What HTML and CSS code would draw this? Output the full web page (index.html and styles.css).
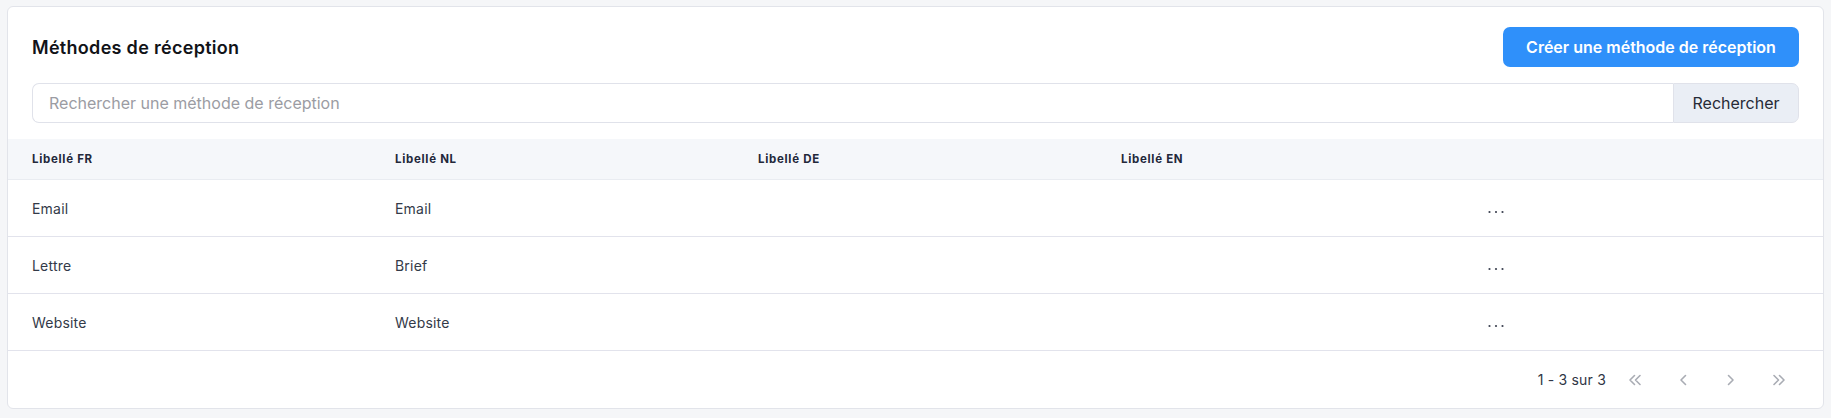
FILE: index.html
```html
<!DOCTYPE html>
<html lang="fr">
<head>
<meta charset="utf-8">
<title>Méthodes de réception</title>
<link rel="stylesheet" href="styles.css">
</head>
<body>
<div class="card">
  <div class="card-head">
    <h1 class="title">Méthodes de réception</h1>
    <button class="btn-primary">Créer une méthode de réception</button>
  </div>
  <div class="search">
    <input class="search-input" type="text" placeholder="Rechercher une méthode de réception">
    <button class="search-btn">Rechercher</button>
  </div>
  <div class="table">
    <div class="row head">
      <div class="cell">Libellé FR</div>
      <div class="cell">Libellé NL</div>
      <div class="cell">Libellé DE</div>
      <div class="cell">Libellé EN</div>
      <div class="cell"></div>
    </div>
    <div class="row">
      <div class="cell">Email</div>
      <div class="cell">Email</div>
      <div class="cell"></div>
      <div class="cell"></div>
      <div class="cell"><span class="dots"><svg width="16" height="4" viewBox="0 0 16 4"><circle cx="1.5" cy="2" r="1.1"/><circle cx="8" cy="2" r="1.1"/><circle cx="14.5" cy="2" r="1.1"/></svg></span></div>
    </div>
    <div class="row">
      <div class="cell">Lettre</div>
      <div class="cell">Brief</div>
      <div class="cell"></div>
      <div class="cell"></div>
      <div class="cell"><span class="dots"><svg width="16" height="4" viewBox="0 0 16 4"><circle cx="1.5" cy="2" r="1.1"/><circle cx="8" cy="2" r="1.1"/><circle cx="14.5" cy="2" r="1.1"/></svg></span></div>
    </div>
    <div class="row">
      <div class="cell">Website</div>
      <div class="cell">Website</div>
      <div class="cell"></div>
      <div class="cell"></div>
      <div class="cell"><span class="dots"><svg width="16" height="4" viewBox="0 0 16 4"><circle cx="1.5" cy="2" r="1.1"/><circle cx="8" cy="2" r="1.1"/><circle cx="14.5" cy="2" r="1.1"/></svg></span></div>
    </div>
  </div>
  <div class="footer">
    <span class="count">1 - 3 sur 3</span>
    <div class="pager">
      <span class="pg"><svg width="16" height="12" viewBox="0 0 16 12"><path d="M7.5 1.5 L3 6 L7.5 10.5 M13 1.5 L8.5 6 L13 10.5"/></svg></span>
      <span class="pg"><svg width="16" height="12" viewBox="0 0 16 12"><path d="M10.5 1.5 L6 6 L10.5 10.5"/></svg></span>
      <span class="pg"><svg width="16" height="12" viewBox="0 0 16 12"><path d="M5.5 1.5 L10 6 L5.5 10.5"/></svg></span>
      <span class="pg"><svg width="16" height="12" viewBox="0 0 16 12"><path d="M3 1.5 L7.5 6 L3 10.5 M8.5 1.5 L13 6 L8.5 10.5"/></svg></span>
    </div>
  </div>
</div>
</body>
</html>
```
FILE: styles.css
```css
* { box-sizing: border-box; }
html, body { margin: 0; }
body {
  background: #f5f6f8;
  padding: 6px 7px 10px 7px;
  font-family: Inter, "Open Sans", "Liberation Sans", sans-serif;
  color: #2f3545;
}
.card {
  background: #fff;
  border: 1px solid #e2e4ea;
  border-radius: 6px;
  overflow: hidden;
}
.card-head {
  display: flex;
  align-items: center;
  justify-content: space-between;
  padding: 20px 24px 0 24px;
}
.title {
  margin: 0;
  font-size: 18px;
  font-weight: 600;
  color: #111318;
  letter-spacing: 0.3px;
}
.btn-primary {
  height: 40px;
  width: 296px;
  border: none;
  border-radius: 7px;
  background: #2f90fa;
  color: #fff;
  font-family: inherit;
  font-size: 16px;
  font-weight: 600;
  padding: 0 16px;
}
.search {
  display: flex;
  margin: 16px 24px 16px 24px;
  height: 40px;
}
.search-input {
  flex: 1;
  border: 1px solid #e0e2ea;
  border-right: none;
  border-radius: 7px 0 0 7px;
  padding: 0 16px;
  font-family: inherit;
  font-size: 16px;
  color: #2f3545;
  outline: none;
}
.search-input::placeholder { color: #9b9ca3; }
.search-btn {
  width: 126px;
  border: 1px solid #e0e2ea;
  border-radius: 0 7px 7px 0;
  background: #eaeef5;
  color: #262a36;
  font-family: inherit;
  font-size: 16px;
  padding: 0 16px;
}
.table { display: flex; flex-direction: column; }
.row {
  display: grid;
  grid-template-columns: repeat(5, 1fr);
  height: 57px;
  border-bottom: 1px solid #e2e3ec;
  align-items: center;
  font-size: 14px;
  color: #333a48;
  letter-spacing: 0.2px;
}
.row.head {
  height: 41px;
  background: #f5f7fa;
  border-bottom: 1px solid #e9ecf1;
  font-size: 11.5px;
  font-weight: 700;
  color: #23283a;
  letter-spacing: 0.7px;
}
.cell { padding-left: 24px; }
.dots {
  display: inline-flex;
  padding-left: 4px;
  fill: #3c4150;
}
.footer {
  display: flex;
  justify-content: flex-end;
  align-items: center;
  height: 57px;
  padding-right: 20px;
}
.count {
  font-size: 14px;
  color: #2f3545;
  letter-spacing: 0.2px;
  margin-right: 5px;
}
.pager { display: flex; }
.pg {
  width: 48px;
  display: flex;
  justify-content: center;
  align-items: center;
}
.pg svg {
  fill: none;
  stroke: #a9acb4;
  stroke-width: 1.6;
  stroke-linecap: round;
  stroke-linejoin: round;
}
```
